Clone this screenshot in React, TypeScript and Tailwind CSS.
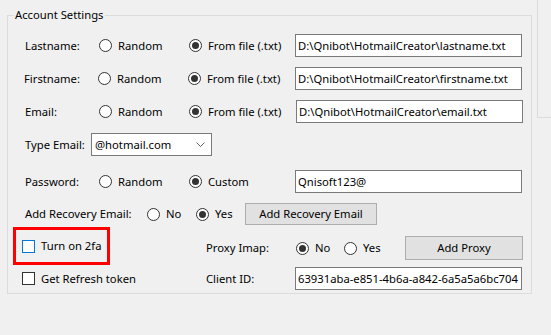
import React from "react";

function Radio({ checked, label }: { checked?: boolean; label: string }) {
  return (
    <div className="flex items-center gap-[6px]">
      <span className="w-[13px] h-[13px] rounded-full border border-[#333333] bg-white flex items-center justify-center shrink-0">
        {checked && <span className="w-[7px] h-[7px] rounded-full bg-[#333333]" />}
      </span>
      <span>{label}</span>
    </div>
  );
}

function Check({ label, focus }: { label: string; focus?: boolean }) {
  return (
    <div className="flex items-center gap-[6px]">
      <span
        className={
          focus
            ? "w-[13px] h-[13px] border border-[#0078d7] bg-white shrink-0"
            : "w-[13px] h-[13px] border border-[#333333] bg-white shrink-0"
        }
      />
      <span>{label}</span>
    </div>
  );
}

function TextBox({ value, w }: { value: string; w: string }) {
  return (
    <div className={`${w} h-[23px] border border-[#7a7a7a] bg-white flex items-center pl-[2px] whitespace-nowrap overflow-hidden`}>
      {value}
    </div>
  );
}

export default function App() {
  return (
    <div
      className="w-[551px] h-[335px] bg-[#f0f0f0] flex items-start text-[11.25px] text-black overflow-hidden leading-[16px]"
      style={{ fontFamily: "'Noto Sans', 'Open Sans', sans-serif" }}
    >
      <div className="ml-[7px] mt-[15px] w-[525px] h-[279px] border border-[#dcdcdc] relative pt-[18px] shrink-0">
        <span className="absolute left-[6px] top-[-9px] px-[1px] bg-[#f0f0f0] leading-[16px]">
          Account Settings
        </span>

        <div className="flex items-center h-[23px] pl-[17px]">
          <div className="w-[74px]">Lastname:</div>
          <div className="w-[90px]"><Radio label="Random" /></div>
          <div className="w-[106px]"><Radio checked label="From file (.txt)" /></div>
          <TextBox w="w-[227px]" value="D:\Qnibot\HotmailCreator\lastname.txt" />
        </div>

        <div className="flex items-center h-[23px] pl-[16px] mt-[10px]">
          <div className="w-[74px]">Firstname:</div>
          <div className="w-[90px]"><Radio label="Random" /></div>
          <div className="w-[107px]"><Radio checked label="From file (.txt)" /></div>
          <TextBox w="w-[227px]" value="D:\Qnibot\HotmailCreator\firstname.txt" />
        </div>

        <div className="flex items-center h-[23px] pl-[17px] mt-[10px]">
          <div className="w-[74px]">Email:</div>
          <div className="w-[90px]"><Radio label="Random" /></div>
          <div className="w-[107px]"><Radio checked label="From file (.txt)" /></div>
          <TextBox w="w-[227px]" value="D:\Qnibot\HotmailCreator\email.txt" />
        </div>

        <div className="flex items-center h-[23px] pl-[17px] mt-[10px]">
          <div className="w-[66px]">Type Email:</div>
          <div className="w-[121px] h-[23px] border border-[#7a7a7a] bg-white flex items-center justify-between pl-[3px] pr-[6px]">
            <span>@hotmail.com</span>
            <svg width="9" height="5" viewBox="0 0 9 5" className="block">
              <polyline points="0.5,0.5 4.5,4.5 8.5,0.5" fill="none" stroke="#606060" strokeWidth="1" />
            </svg>
          </div>
        </div>

        <div className="flex items-center h-[23px] pl-[17px] mt-[14px]">
          <div className="w-[74px]">Password:</div>
          <div className="w-[90px]"><Radio label="Random" /></div>
          <div className="w-[106px]"><Radio checked label="Custom" /></div>
          <TextBox w="w-[227px]" value="Qnisoft123@" />
        </div>

        <div className="flex items-center h-[22px] pl-[17px] mt-[10px]">
          <div className="w-[122px]">Add Recovery Email:</div>
          <div className="w-[49px]"><Radio label="No" /></div>
          <div className="w-[49px]"><Radio checked label="Yes" /></div>
          <button className="w-[132px] h-[22px] bg-[#e1e1e1] border border-[#adadad] flex items-center justify-center">
            Add Recovery Email
          </button>
        </div>

        <div className="flex items-start">
          <div className="w-[198px] flex flex-col">
            <div className="ml-[5px] mt-[2px] w-[97px] h-[38px] border-[3px] border-[#ff0000] flex items-center pl-[6px]">
              <Check focus label="Turn on 2fa" />
            </div>
            <div className="mt-[2px] h-[23px] pl-[14px] flex items-center">
              <Check label="Get Refresh token" />
            </div>
          </div>
          <div className="flex flex-col pt-[11px]">
            <div className="flex items-center h-[24px]">
              <div className="w-[90px]">Proxy Imap:</div>
              <div className="w-[48px]"><Radio checked label="No" /></div>
              <div className="w-[61px]"><Radio label="Yes" /></div>
              <button className="w-[118px] h-[24px] bg-[#e1e1e1] border border-[#adadad] flex items-center justify-center">
                Add Proxy
              </button>
            </div>
            <div className="flex items-center h-[23px] mt-[7px]">
              <div className="w-[89px]">Client ID:</div>
              <TextBox w="w-[227px]" value="63931aba-e851-4b6a-a842-6a5a5a6bc704" />
            </div>
          </div>
        </div>
      </div>
      <div className="ml-[5px] w-[14px] h-[118px] border-l border-b border-[#dcdcdc] shrink-0" />
    </div>
  );
}
